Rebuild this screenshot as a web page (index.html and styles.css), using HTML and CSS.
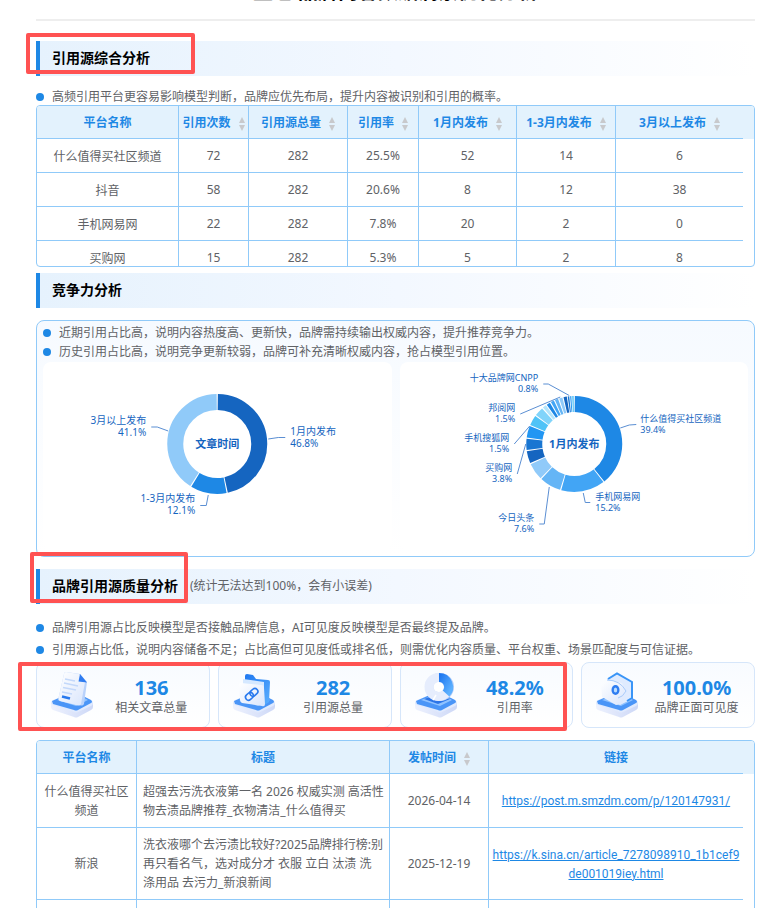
FILE: index.html
```html
<!DOCTYPE html>
<html lang="zh-CN">
<head>
    <meta charset="UTF-8">
    <title>引用源分析</title>
    <link rel="stylesheet" href="styles.css">
</head>
<body>
<div class="page">
    <header class="top">
        <h1>豆包 品牌内容数据洞察优化分析</h1>
    </header>

    <!--引用源综合分析-->
    <section>
        <div class="title title-first">
            <h2>引用源综合分析</h2>
            <span class="mark mark-source"></span>
        </div>
        <ul class="tips">
            <li>高频引用平台更容易影响模型判断，品牌应优先布局，提升内容被识别和引用的概率。</li>
        </ul>
        <div class="table-box table-short">
            <table class="table">
                <colgroup>
                    <col class="w142"><col class="w70"><col class="w99"><col class="w71"><col class="w98"><col class="w99"><col class="w127">
                </colgroup>
                <thead>
                <tr>
                    <th>平台名称</th>
                    <th>引用次数<button class="sort" aria-label="排序"></button></th>
                    <th>引用源总量<button class="sort" aria-label="排序"></button></th>
                    <th>引用率<button class="sort" aria-label="排序"></button></th>
                    <th>1月内发布<button class="sort" aria-label="排序"></button></th>
                    <th>1-3月内发布<button class="sort" aria-label="排序"></button></th>
                    <th>3月以上发布<button class="sort" aria-label="排序"></button></th>
                </tr>
                </thead>
                <tbody>
                <tr><td>什么值得买社区频道</td><td>72</td><td>282</td><td>25.5%</td><td>52</td><td>14</td><td>6</td></tr>
                <tr><td>抖音</td><td>58</td><td>282</td><td>20.6%</td><td>8</td><td>12</td><td>38</td></tr>
                <tr><td>手机网易网</td><td>22</td><td>282</td><td>7.8%</td><td>20</td><td>2</td><td>0</td></tr>
                <tr><td>买购网</td><td>15</td><td>282</td><td>5.3%</td><td>5</td><td>2</td><td>8</td></tr>
                </tbody>
            </table>
        </div>
    </section>

    <!--竞争力分析-->
    <section>
        <div class="title title-second">
            <h2>竞争力分析</h2>
        </div>
        <div class="panel">
            <ul class="tips tips-tight">
                <li>近期引用占比高，说明内容热度高、更新快，品牌需持续输出权威内容，提升推荐竞争力。</li>
                <li>历史引用占比高，说明竞争更新较弱，品牌可补充清晰权威内容，抢占模型引用位置。</li>
            </ul>
            <div class="charts">
                <div class="chart">
                    <svg viewBox="0 0 348 188">
                        <g class="ring ring-big" transform="rotate(-90 174 82)">
                            <circle cx="174" cy="82" r="42" pathLength="100" stroke="#1565c0" stroke-dasharray="46.4 100" stroke-dashoffset="-0.2"/>
                            <circle cx="174" cy="82" r="42" pathLength="100" stroke="#1e88e5" stroke-dasharray="11.7 100" stroke-dashoffset="-47"/>
                            <circle cx="174" cy="82" r="42" pathLength="100" stroke="#90caf9" stroke-dasharray="40.7 100" stroke-dashoffset="-59.1"/>
                        </g>
                        <g class="lead">
                            <path d="M225 77 L235 75.5 H242"/>
                            <path d="M125 69 L114 65 H108"/>
                            <path d="M165 133 L163 143.5 H157"/>
                        </g>
                        <g class="name">
                            <text x="247" y="73">1月内发布</text><text x="247" y="85">46.8%</text>
                            <text class="end" x="103" y="62">3月以上发布</text><text class="end" x="103" y="74">41.1%</text>
                            <text class="end" x="152" y="140">1-3月内发布</text><text class="end" x="152" y="152">12.1%</text>
                        </g>
                        <text class="center" x="174" y="86">文章时间</text>
                    </svg>
                </div>
                <div class="chart">
                    <svg viewBox="0 0 348 188">
                        <g class="ring" transform="rotate(-90 174 82)">
                            <circle cx="174" cy="82" r="40" pathLength="100" stroke="#1e88e5" stroke-dasharray="39 100" stroke-dashoffset="-0.2"/>
                            <circle cx="174" cy="82" r="40" pathLength="100" stroke="#42a5f5" stroke-dasharray="14.8 100" stroke-dashoffset="-39.6"/>
                            <circle cx="174" cy="82" r="40" pathLength="100" stroke="#64b5f6" stroke-dasharray="7.2 100" stroke-dashoffset="-54.8"/>
                            <circle cx="174" cy="82" r="40" pathLength="100" stroke="#90caf9" stroke-dasharray="5.7 100" stroke-dashoffset="-62.4"/>
                            <circle cx="174" cy="82" r="40" pathLength="100" stroke="#1565c0" stroke-dasharray="4.1 100" stroke-dashoffset="-68.5"/>
                            <circle cx="174" cy="82" r="40" pathLength="100" stroke="#1976d2" stroke-dasharray="3.8 100" stroke-dashoffset="-73"/>
                            <circle cx="174" cy="82" r="40" pathLength="100" stroke="#2196f3" stroke-dasharray="3.9 100" stroke-dashoffset="-77.2"/>
                            <circle cx="174" cy="82" r="40" pathLength="100" stroke="#4fc3f7" stroke-dasharray="3.4 100" stroke-dashoffset="-81.5"/>
                            <circle cx="174" cy="82" r="40" pathLength="100" stroke="#81d4fa" stroke-dasharray="3 100" stroke-dashoffset="-85.3"/>
                            <circle cx="174" cy="82" r="40" pathLength="100" stroke="#b3e5fc" stroke-dasharray="1.2 100" stroke-dashoffset="-88.7"/>
                            <circle cx="174" cy="82" r="40" pathLength="100" stroke="#1e88e5" stroke-dasharray="1.2 100" stroke-dashoffset="-90.3"/>
                            <circle cx="174" cy="82" r="40" pathLength="100" stroke="#42a5f5" stroke-dasharray="1.1 100" stroke-dashoffset="-91.9"/>
                            <circle cx="174" cy="82" r="40" pathLength="100" stroke="#64b5f6" stroke-dasharray="1.1 100" stroke-dashoffset="-93.4"/>
                            <circle cx="174" cy="82" r="40" pathLength="100" stroke="#90caf9" stroke-dasharray="1.1 100" stroke-dashoffset="-94.9"/>
                            <circle cx="174" cy="82" r="40" pathLength="100" stroke="#1565c0" stroke-dasharray="1.1 100" stroke-dashoffset="-96.4"/>
                            <circle cx="174" cy="82" r="40" pathLength="100" stroke="#1976d2" stroke-dasharray="0.5 100" stroke-dashoffset="-97.8"/>
                            <circle cx="174" cy="82" r="40" pathLength="100" stroke="#2196f3" stroke-dasharray="0.4 100" stroke-dashoffset="-98.6"/>
                            <circle cx="174" cy="82" r="40" pathLength="100" stroke="#4fc3f7" stroke-dasharray="0.5 100" stroke-dashoffset="-99.3"/>
                        </g>
                        <g class="lead">
                            <path d="M220 66 L229 63 L236 62.5"/>
                            <path d="M183 131 L185 140.5 H190"/>
                            <path d="M149 125 L144 162 H139"/>
                            <path d="M125.5 82 L117 112"/>
                            <path d="M129.5 64 L114 82"/>
                            <path d="M160 35 L120 52"/>
                            <path d="M169 33.5 L148 22 H143"/>
                        </g>
                        <g class="name name-small">
                            <text x="240" y="60">什么值得买社区频道</text><text x="240" y="71">39.4%</text>
                            <text x="195" y="138">手机网易网</text><text x="195" y="149">15.2%</text>
                            <text class="end" x="134" y="159">今日头条</text><text class="end" x="134" y="170">7.6%</text>
                            <text class="end" x="112" y="109">买购网</text><text class="end" x="112" y="120">3.8%</text>
                            <text class="end" x="109" y="79">手机搜狐网</text><text class="end" x="109" y="90">1.5%</text>
                            <text class="end" x="115" y="49">邦阅网</text><text class="end" x="115" y="60">1.5%</text>
                            <text class="end" x="138" y="19">十大品牌网CNPP</text><text class="end" x="138" y="30">0.8%</text>
                        </g>
                        <text class="center" x="174" y="86">1月内发布</text>
                    </svg>
                </div>
            </div>
        </div>
    </section>

    <!--品牌引用源质量分析-->
    <section>
        <div class="title title-third">
            <h2>品牌引用源质量分析</h2>
            <span class="note">(统计无法达到100%，会有小误差)</span>
            <span class="mark mark-quality"></span>
        </div>
        <ul class="tips tips-loose">
            <li>品牌引用源占比反映模型是否接触品牌信息，AI可见度反映模型是否最终提及品牌。</li>
            <li>引用源占比低，说明内容储备不足；占比高但可见度低或排名低，则需优化内容质量、平台权重、场景匹配度与可信证据。</li>
        </ul>
        <svg class="defs" width="0" height="0">
            <defs>
                <linearGradient id="blue" x1="0" y1="0" x2="1" y2="1">
                    <stop offset="0" stop-color="#1f78f0"/><stop offset="1" stop-color="#5cb0ff"/>
                </linearGradient>
                <linearGradient id="pale" x1="0" y1="0" x2="1" y2="1">
                    <stop offset="0" stop-color="#ffffff"/><stop offset="1" stop-color="#d9e5fc"/>
                </linearGradient>
                <linearGradient id="side" x1="0" y1="0" x2="1" y2="0">
                    <stop offset="0" stop-color="#eef2fe"/><stop offset="1" stop-color="#cdd8f7"/>
                </linearGradient>
                <!--底座-->
                <g id="base">
                    <path d="M1 33 V37 Q1 39 3 40 L24 47 Q26 48 28 47 L41 40 Q43 39 43 37 V33 Z" fill="url(#side)"/>
                    <path d="M1 33 Q1 31 3 30 L18 24 H29 L41 30 Q43 31 43 33 Q43 35 41 36 L28 42 Q26 43 24 42 L3 35 Q1 34 1 33 Z" fill="#e0eafe"/>
                    <path d="M2 31 L18 24 H29 L41 30 Q43 32 41 33 L28 40 Q26 41 24 40 L3 34 Z" fill="#4a95f7"/>
                    <path d="M7 30 L20 25 H29 L38 30 L26 36 Z" fill="#8fc2ff"/>
                </g>
            </defs>
        </svg>
        <div class="cards">
            <div class="card">
                <svg class="icon" viewBox="0 0 44 50">
                    <use href="#base"/>
                    <path d="M14 4 Q14 2 16 2 L30 4 L37 12 L34 34 Q33 36 31 35.5 L10 31 Q8 30 8.5 28 Z" fill="#b9d2fb"/>
                    <path d="M14 4 Q14 2 16 2 L29 4 L35 12 L31 34 Q30 36 28 35.5 L10 31 Q8 30 8.5 28 Z" fill="url(#pale)"/>
                    <path d="M30 4 L37 12.5 L28.5 11.5 Z" fill="#2f7cf0"/>
                    <path d="M15 9 L25 11 M14 13 L28 16 M13 17.5 L26 20 M12 22 L22 24" stroke="#c3d8fa" stroke-width="1.5" fill="none"/>
                    <path d="M12 26.5 L20 28.5" stroke="#2879ee" stroke-width="2.5"/>
                </svg>
                <div class="info"><strong>136</strong><span>相关文章总量</span></div>
            </div>
            <div class="card">
                <svg class="icon" viewBox="0 0 44 50">
                    <use href="#base"/>
                    <path d="M13 6 Q13 4 15 4 L21 5 L24 9 L36 10 Q38 10 38 12 L37 32 L31 36 L13 30 Z" fill="url(#blue)"/>
                    <path d="M11 9 L32 12 V19 L11 15 Z" fill="#d5e8ff"/>
                    <path d="M7 15 Q7 13 9 13 L29 15 Q32 15 32 18 L33 34 Q33 37 30 36 L10 33 Q8 32 8 30 Z" fill="url(#pale)"/>
                    <g fill="none" stroke="#2879ee" stroke-width="1.6" transform="rotate(-42 19.5 24.5)">
                        <rect x="12.5" y="21.5" width="8.5" height="6" rx="3"/>
                        <rect x="18.5" y="21.5" width="8.5" height="6" rx="3"/>
                    </g>
                </svg>
                <div class="info"><strong>282</strong><span>引用源总量</span></div>
            </div>
            <div class="card">
                <svg class="icon" viewBox="0 0 44 50">
                    <use href="#base"/>
                    <path d="M10 29 L22 25 L36 29 L24 34 Z" fill="#2c75e8"/>
                    <circle cx="26" cy="17" r="9.5" fill="none" stroke="#b9cff7" stroke-width="9"/>
                    <circle cx="24.5" cy="17" r="9.5" fill="none" stroke="#e6edfd" stroke-width="9"/>
                    <circle cx="24.5" cy="17" r="5" fill="#fff"/>
                    <path d="M25 7.5 A9.5 9.5 0 0 1 32 23.5" fill="none" stroke="url(#blue)" stroke-width="9"/>
                    <path d="M22 25 L19 30" stroke="#fff" stroke-width="1.5"/>
                </svg>
                <div class="info"><strong>48.2%</strong><span>引用率</span></div>
            </div>
            <div class="card">
                <svg class="icon" viewBox="0 0 44 50">
                    <use href="#base"/>
                    <path d="M12 9 L22 3.5 L37 12 V29 L25 35 L12 27 Z" fill="#dfebff"/>
                    <path d="M13 9 L22 3.5 L37 12 V28 L32 31" fill="none" stroke="#3a95f7" stroke-width="2"/>
                    <path d="M6 14 L12 10 L27 13 L31 21 L27 34 L21 35 L7 27 Z" fill="url(#pale)"/>
                    <path d="M12 10 Q25 10 31 21 Q28 27 23 28" fill="none" stroke="#a8cbfb"/>
                    <ellipse cx="20.5" cy="20" rx="4" ry="5" fill="#2d7cf1"/>
                    <ellipse cx="20.5" cy="20" rx="1.7" ry="2.5" fill="#b9dcff"/>
                </svg>
                <div class="info"><strong>100.0%</strong><span>品牌正面可见度</span></div>
            </div>
            <span class="mark mark-cards"></span>
        </div>
        <div class="table-box">
            <table class="table table-link">
                <colgroup>
                    <col class="w100"><col class="w253"><col class="w99"><col class="w254">
                </colgroup>
                <thead>
                <tr>
                    <th>平台名称</th>
                    <th>标题</th>
                    <th>发帖时间<button class="sort" aria-label="排序"></button></th>
                    <th>链接</th>
                </tr>
                </thead>
                <tbody>
                <tr>
                    <td>什么值得买社区频道</td>
                    <td class="left">超强去污洗衣液第一名 2026 权威实测 高活性物去渍品牌推荐_衣物清洁_什么值得买</td>
                    <td>2026-04-14</td>
                    <td class="link"><a href="https://post.m.smzdm.com/p/120147931/">https://post.m.smzdm.com/p/120147931/</a></td>
                </tr>
                <tr>
                    <td>新浪</td>
                    <td class="left">洗衣液哪个去污渍比较好?2025品牌排行榜:别再只看名气，选对成分才 衣服 立白 汰渍 洗<br>涤用品 去污力_新浪新闻</td>
                    <td>2025-12-19</td>
                    <td class="link"><a href="https://k.sina.cn/article_7278098910_1b1cef9de001019iey.html">https://k.sina.cn/article_7278098910_1b1cef9<br>de001019iey.html</a></td>
                </tr>
                <tr><td></td><td></td><td></td><td></td></tr>
                </tbody>
            </table>
        </div>
    </section>
</div>
</body>
</html>
```
FILE: styles.css
```css
*{
    box-sizing: border-box;
}
body{
    margin: 0;
    height: 100vh;
    overflow: hidden;
    background-color: #fff;
    color: #606266;
    font-family: "Noto Sans", "Noto Sans CJK SC", sans-serif;
    font-size: 12px;
}
.page{
    height: 100vh;
    padding: 0 8px 0 36px;
    overflow: hidden;
}
/*页头*/
.top{
    display: flex;
    justify-content: center;
    align-items: flex-end;
    height: 21px;
    padding-bottom: 15px;
    border-bottom: 2px solid #eee;
}
.top h1{
    margin: 0;
    font-size: 20px;
    line-height: 24px;
    color: #000;
}
/*分区标题*/
.title{
    position: relative;
    display: flex;
    align-items: center;
    height: 35px;
    padding: 0 0 3px 12px;
    border-left: 4px solid #1e88e5;
    background: linear-gradient(90deg, #e6f2fd, #f3f8ff 50%, #fff);
}
.title h2{
    margin: 0;
    font-size: 14px;
    color: #000;
}
.title-first{
    margin-top: 20px;
}
.title-second{
    margin: 6px 0 12px;
}
.title-third{
    margin-top: 12px;
}
.note{
    margin-left: 12px;
}
/*说明列表*/
.tips{
    list-style: none;
    margin: 12px 0 0;
    padding: 0;
    line-height: 18px;
}
.tips li{
    display: flex;
    align-items: center;
    gap: 8px;
    white-space: nowrap;
}
.tips li::before{
    content: "";
    width: 8px;
    height: 8px;
    border-radius: 50%;
    background-color: #1e88e5;
}
.tips-tight{
    margin: 0;
    line-height: 19px;
}
.tips-loose{
    margin-top: 13px;
    line-height: 22px;
}
/*表格*/
.table-box{
    border: 1px solid #90caf9;
    border-radius: 4px;
    overflow: hidden;
}
.table-short{
    height: 162px;
    margin-top: -1px;
}
.table{
    width: calc(100% - 11px);
    table-layout: fixed;
    border-spacing: 0;
    text-align: center;
}
.table th,
.table td{
    padding: 0 6px;
    height: 34px;
    border-right: 1px solid #90caf9;
    border-bottom: 1px solid #90caf9;
}
.table th{
    height: 33px;
    padding: 0;
    background-color: #e3f2fd;
    color: #1e88e5;
    white-space: nowrap;
}
.table th:last-child,
.table td:last-child{
    border-right: none;
}
.table th:last-child{
    box-shadow: 12px 0 0 #e3f2fd;
}
.table-link td{
    height: 54px;
    padding: 7px 6px;
    line-height: 19px;
}
.table-link .left{
    padding-right: 4px;
    text-align: left;
}
.table-link .link{
    padding: 7px 2px;
}
.table a{
    color: #1e88e5;
    font-family: Roboto, "Noto Sans CJK SC", sans-serif;
    line-height: 18px;
    word-break: break-all;
}
.w70{ width: 70px; }
.w71{ width: 71px; }
.w98{ width: 98px; }
.w99{ width: 99px; }
.w100{ width: 100px; }
.w127{ width: 127px; }
.w142{ width: 142px; }
.w253{ width: 253px; }
.w254{ width: 254px; }
/*排序箭头*/
.sort{
    display: inline-flex;
    flex-direction: column;
    gap: 2px;
    margin-left: 8px;
    padding: 0;
    border: none;
    background: none;
    vertical-align: middle;
    cursor: pointer;
}
.sort::before,
.sort::after{
    content: "";
    border: 3px solid transparent;
}
.sort::before{
    border-top: none;
    border-bottom: 6px solid #c8c9cc;
}
.sort::after{
    border-bottom: none;
    border-top: 6px solid #c8c9cc;
}
/*图表*/
.panel{
    padding: 2px 6px 6px;
    border: 1px solid #90caf9;
    border-radius: 8px;
    background: linear-gradient(#f6faff, #fff);
}
.charts{
    display: flex;
    gap: 8px;
    margin-top: 1px;
}
.chart{
    flex: 1;
    border-radius: 8px;
    background-color: #fff;
}
.chart svg{
    display: block;
    width: 100%;
    height: 188px;
}
.ring circle{
    fill: none;
    stroke-width: 16px;
}
.lead{
    fill: none;
    stroke: #5b8fd3;
}
.chart text{
    fill: #1565c0;
}
.name{
    font-size: 10px;
}
.name-small{
    font-size: 9px;
}
.end{
    text-anchor: end;
}
.center{
    text-anchor: middle;
    font-size: 11px;
    font-weight: bold;
}
/*统计卡片*/
.defs{
    display: block;
}
.cards{
    position: relative;
    display: grid;
    grid-template-columns: repeat(4, 1fr);
    gap: 8px;
    margin: 1px 0 12px;
}
.card{
    display: flex;
    align-items: center;
    height: 66px;
    padding-left: 13px;
    border: 1px solid #d6e6fa;
    border-radius: 8px;
    background: linear-gradient(#f8fbff, #fff);
}
.icon{
    width: 44px;
    height: 50px;
}
.info{
    flex: 1;
    display: flex;
    flex-direction: column;
    align-items: center;
    padding-top: 3px;
}
.info strong{
    font-size: 20px;
    line-height: 22px;
    color: #1e88e5;
}
.info span{
    line-height: 18px;
}
/*红框标注*/
.mark{
    position: absolute;
    border: 4px solid #ff5252;
    border-radius: 2px;
}
.mark-source{
    top: -8px;
    left: -14px;
    width: 169px;
    height: 41px;
}
.mark-quality{
    top: -17px;
    left: -10px;
    width: 158px;
    height: 51px;
}
.mark-cards{
    top: 0;
    left: -18px;
    right: 188px;
    height: 69px;
}
```
